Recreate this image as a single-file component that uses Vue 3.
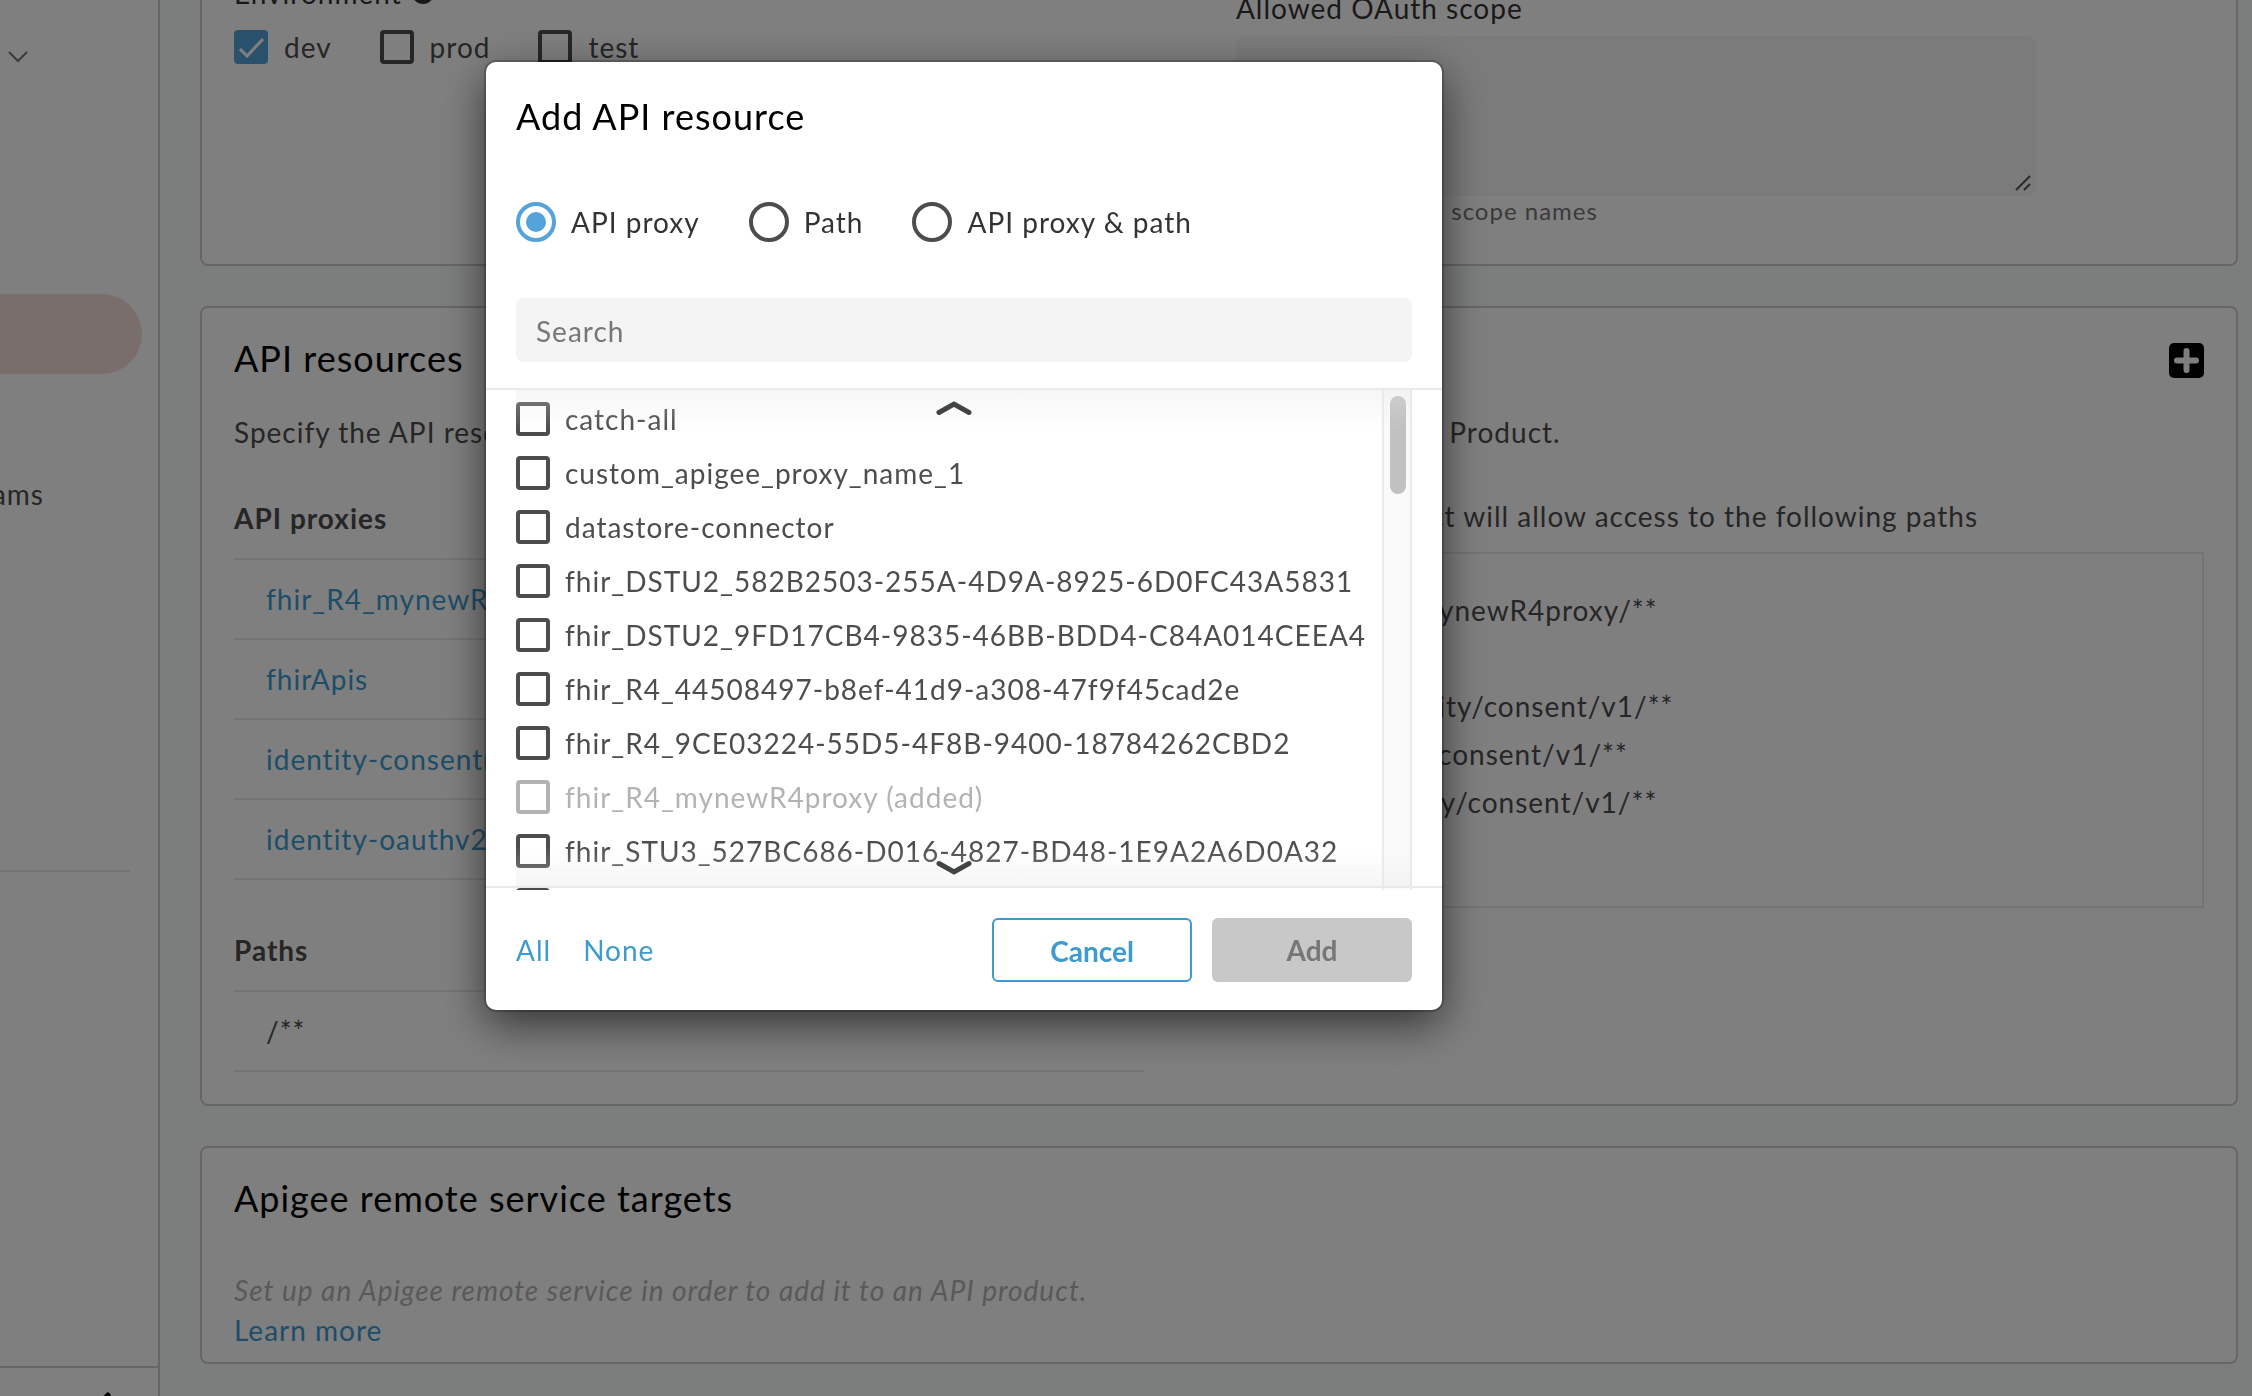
<script setup>
import { ref } from 'vue'

const environments = ref([
  { name: 'dev', on: true },
  { name: 'prod', on: false },
  { name: 'test', on: false },
])

const proxies = ['fhir_R4_mynewR4proxy', 'fhirApis', 'identity-consentmgmt', 'identity-oauthv2']

const allowedPaths = [
  '/apps/fhir/mynewR4proxy/**',
  '/fhir/**',
  '/as/v1/identity/consent/v1/**',
  '/r1/identity/consent/v1/**',
  '/idv2/identity/consent/v1/**',
  '/oauth/**',
]

const kind = ref('proxy')
const kinds = [
  { value: 'proxy', label: 'API proxy' },
  { value: 'path', label: 'Path' },
  { value: 'both', label: 'API proxy & path' },
]

const options = [
  { name: 'catch-all' },
  { name: 'custom_apigee_proxy_name_1' },
  { name: 'datastore-connector' },
  { name: 'fhir_DSTU2_582B2503-255A-4D9A-8925-6D0FC43A5831' },
  { name: 'fhir_DSTU2_9FD17CB4-9835-46BB-BDD4-C84A014CEEA4' },
  { name: 'fhir_R4_44508497-b8ef-41d9-a308-47f9f45cad2e' },
  { name: 'fhir_R4_9CE03224-55D5-4F8B-9400-18784262CBD2' },
  { name: 'fhir_R4_mynewR4proxy (added)', added: true },
  { name: 'fhir_STU3_527BC686-D016-4827-BD48-1E9A2A6D0A32' },
  { name: 'fhirApis' },
]
</script>

<template>
  <div class="page">
    <aside class="sidebar">
      <svg class="side-chevron" width="20" height="12" viewBox="0 0 20 12" aria-hidden="true">
        <path d="M1 1l9 9 9-9" fill="none" stroke="#777" stroke-width="2" />
      </svg>
      <div class="side-active"></div>
      <div class="side-item">Teams</div>
      <hr class="side-rule" />
      <div class="side-foot">
        <svg width="24" height="40" viewBox="0 0 24 40" aria-hidden="true">
          <path d="M20 3L4 20l16 17" fill="none" stroke="#000" stroke-width="5" stroke-linecap="round" />
        </svg>
      </div>
    </aside>

    <main class="content">
      <section class="card card-details">
        <div class="columns">
          <div class="env">
            <div class="field-label env-label">
              Environment
              <svg width="22" height="22" viewBox="0 0 22 22" aria-hidden="true"><circle cx="11" cy="11" r="11" fill="#333" /></svg>
            </div>
            <div class="env-list">
              <label v-for="e in environments" :key="e.name" class="check">
                <input v-model="e.on" type="checkbox" />
                <span>{{ e.name }}</span>
              </label>
            </div>
          </div>
          <div class="scope">
            <label class="field-label scope-label" for="scope">Allowed OAuth scope</label>
            <div class="scope-wrap">
              <textarea id="scope" class="scope-box"></textarea>
              <svg class="grip" width="16" height="16" viewBox="0 0 16 16" aria-hidden="true">
                <path d="M1 15L15 1M9 15l6-6" stroke="#555" stroke-width="2" />
              </svg>
            </div>
            <p class="hint">Comma-separated scope names</p>
          </div>
        </div>
      </section>

      <section class="card">
        <header class="card-head">
          <h2>API resources</h2>
          <button class="plus" type="button" aria-label="Add API resource">
            <svg width="35" height="35" viewBox="0 0 35 35" aria-hidden="true">
              <rect width="35" height="35" rx="5" fill="#000" />
              <path d="M17.500 8v19M8 17.500h19" stroke="#fff" stroke-width="6" stroke-linecap="round" />
            </svg>
          </button>
        </header>
        <p class="lead">
          Specify the API resources, API proxies and resource paths, that are to be bundled in the API Product.
        </p>
        <div class="columns resources">
          <div>
            <h3>API proxies</h3>
            <table class="rows">
              <tbody>
                <tr v-for="p in proxies" :key="p">
                  <td><a href="#">{{ p }}</a></td>
                </tr>
              </tbody>
            </table>
            <h3 class="paths-title">Paths</h3>
            <table class="rows">
              <tbody>
                <tr>
                  <td>/**</td>
                </tr>
              </tbody>
            </table>
          </div>
          <div>
            <p class="allow">This API product will allow access to the following paths</p>
            <ul class="allowed">
              <li v-for="p in allowedPaths" :key="p">{{ p }}</li>
            </ul>
          </div>
        </div>
      </section>

      <section class="card card-targets">
        <header class="card-head">
          <h2>Apigee remote service targets</h2>
        </header>
        <p class="empty">Set up an Apigee remote service in order to add it to an API product.</p>
        <a class="learn" href="#">Learn more</a>
      </section>
    </main>

    <div class="overlay">
      <form class="modal" role="dialog" aria-labelledby="modal-title" @submit.prevent>
        <h2 id="modal-title" class="modal-title">Add API resource</h2>
        <div class="kinds">
          <label v-for="k in kinds" :key="k.value" class="radio">
            <input v-model="kind" type="radio" name="kind" :value="k.value" />
            <span>{{ k.label }}</span>
          </label>
        </div>
        <div class="search">
          <input type="text" placeholder="Search" aria-label="Search" />
        </div>
        <div class="picker">
          <div class="options">
            <label
              v-for="o in options"
              :key="o.name"
              class="check option"
              :class="{ added: o.added }"
            >
              <input type="checkbox" :disabled="o.added" />
              <span>{{ o.name }}</span>
            </label>
          </div>
          <div class="track"><div class="thumb"></div></div>
          <div class="shade shade-top">
            <svg width="36" height="16" viewBox="0 0 36 16" aria-hidden="true">
              <path d="M3 12.500L18 4l15 8.500" fill="none" stroke="#404442" stroke-width="5" stroke-linecap="round" />
            </svg>
          </div>
          <div class="shade shade-bottom">
            <svg width="36" height="16" viewBox="0 0 36 16" aria-hidden="true">
              <path d="M3 3.500L18 12l15-8.500" fill="none" stroke="#404442" stroke-width="5" stroke-linecap="round" />
            </svg>
          </div>
          <div class="picker-rule"></div>
        </div>
        <footer class="modal-foot">
          <div class="quick">
            <a href="#">All</a>
            <a href="#">None</a>
          </div>
          <div class="actions">
            <button class="btn cancel" type="button">Cancel</button>
            <button class="btn add" type="submit" disabled>Add</button>
          </div>
        </footer>
      </form>
    </div>
  </div>
</template>

<style>
body {
  margin: 0;
  overflow: hidden;
}
</style>

<style scoped>
.page {
  display: flex;
  height: 100vh;
  overflow: hidden;
  background: #f9fcfa;
  color: #4d4d4d;
  font-family: Lato, "Liberation Sans", sans-serif;
  font-size: 28px;
  line-height: 40px;
  letter-spacing: 1px;
}
.page *,
.page *::before {
  box-sizing: border-box;
}
h2,
h3,
p,
ul {
  margin: 0;
  padding: 0;
}
a {
  color: #3d9bd1;
  text-decoration: none;
}
input,
textarea,
button {
  font: inherit;
  letter-spacing: inherit;
  margin: 0;
}

/* Sidebar */
.sidebar {
  display: flex;
  flex-direction: column;
  flex: none;
  width: 160px;
  border-right: 2px solid #ccc;
  background: #fff;
  overflow: hidden;
}
.side-chevron {
  flex: none;
  margin: 51px 0 231px 8px;
}
.side-active {
  flex: none;
  height: 80px;
  margin-right: 16px;
  border-radius: 0 40px 40px 0;
  background: #f4ddd8;
}
.side-item {
  display: flex;
  flex: none;
  align-items: center;
  justify-content: flex-end;
  height: 80px;
  margin-top: 80px;
  padding-right: 114px;
}
.side-rule {
  flex: none;
  width: 130px;
  height: 2px;
  margin: 336px 0 0;
  border: 0;
  background: #e6e6e6;
}
.side-foot {
  height: 30px;
  margin-top: auto;
  padding: 24px 0 0 88px;
  border-top: 2px solid #ccc;
  overflow: hidden;
}
.side-foot svg {
  display: block;
}

/* Cards */
.content {
  display: flex;
  flex: 1;
  flex-direction: column;
  gap: 40px;
  min-width: 0;
  margin-top: -83px;
  padding: 0 14px 0 40px;
}
.card {
  flex: none;
  padding: 32px;
  border: 2px solid #ccc;
  border-radius: 8px;
  background: #fff;
}
.card-details {
  padding-top: 54px;
  padding-bottom: 20px;
}
.card-targets {
  padding-bottom: 12px;
}
.columns {
  display: grid;
  grid-template-columns: minmax(0, 47fr) minmax(0, 50fr);
  column-gap: 92px;
}
.field-label {
  display: flex;
  align-items: center;
  gap: 10px;
  height: 40px;
  color: #333;
}
.env-label {
  margin-bottom: 14px;
}
.env-list {
  display: flex;
  gap: 48px;
}
.check {
  display: flex;
  align-items: center;
  gap: 16px;
}
.check input {
  appearance: none;
  flex: none;
  width: 34px;
  height: 34px;
  border: 4px solid #4d4d4d;
  border-radius: 4px;
  background: #fff;
}
.check input:checked {
  border-color: #55a3d8;
  background: #55a3d8 url("data:image/svg+xml,%3Csvg xmlns='http://www.w3.org/2000/svg' viewBox='0 0 34 34'%3E%3Cpath d='M6 19l7 7L29 9' fill='none' stroke='%23fff' stroke-width='3'/%3E%3C/svg%3E") center / 34px 34px no-repeat border-box;
}
.scope-label {
  margin: 15px 0 8px;
}
.scope-wrap {
  position: relative;
  width: 800px;
  max-width: 100%;
}
.scope-box {
  display: block;
  width: 100%;
  height: 160px;
  padding: 16px;
  border: 0;
  border-radius: 8px;
  background: #f6f6f6;
  resize: none;
}
.grip {
  position: absolute;
  right: 5px;
  bottom: 5px;
}
.hint {
  height: 48px;
  color: #757575;
  font-size: 24px;
  line-height: 30px;
}
.card-head {
  display: flex;
  align-items: center;
  justify-content: space-between;
  height: 40px;
}
.card-head h2,
.modal-title {
  color: #000;
  font-size: 36px;
  font-weight: 400;
}
.card-head h2 {
  padding-bottom: 4px;
}
.plus {
  padding: 0;
  border: 0;
  background: none;
}
.plus svg {
  display: block;
}
.lead {
  margin-top: 32px;
}
.resources {
  margin-top: 44px;
}
h3 {
  padding: 2px 0 20px;
  font-size: 28px;
  font-weight: 700;
}
.rows {
  width: 100%;
  border-collapse: separate;
  border-spacing: 0;
  border-top: 2px solid #e9e9e9;
}
.rows td {
  height: 80px;
  padding: 0 32px;
  border-bottom: 2px solid #e9e9e9;
}
.paths-title {
  margin-top: 48px;
}
.allow {
  margin-bottom: 16px;
}
.allowed {
  padding: 32px;
  border: 2px solid #e9e9e9;
  list-style: none;
  line-height: 48px;
}
.empty {
  margin-top: 50px;
  color: #b3b3b3;
  font-style: italic;
}
.learn {
  display: table;
}

/* Dialog */
.overlay {
  position: fixed;
  inset: 0;
  padding: 62px 0 0 486px;
  background: rgba(0, 0, 0, 0.5);
}
.modal {
  width: 956px;
  border-radius: 10px;
  background: #fff;
  box-shadow: 0 0 0 2px rgba(0, 0, 0, 0.2), 0 14px 44px rgba(0, 0, 0, 0.6);
}
.modal-title {
  padding: 34px 30px 0;
}
.kinds {
  display: flex;
  gap: 49px;
  padding: 66px 30px 56px;
}
.radio {
  display: flex;
  align-items: center;
  gap: 15px;
  color: #333;
}
.radio input {
  appearance: none;
  display: grid;
  place-items: center;
  flex: none;
  width: 40px;
  height: 40px;
  border: 4px solid #4d4d4d;
  border-radius: 50%;
}
.radio input:checked {
  border-color: #55a3d8;
}
.radio input:checked::before {
  content: "";
  width: 20px;
  height: 20px;
  border-radius: 50%;
  background: #55a3d8;
}
.search {
  padding: 0 30px 26px;
  border-bottom: 2px solid #eaeaea;
}
.search input {
  display: block;
  width: 100%;
  height: 64px;
  padding: 2px 20px 0;
  border: 0;
  border-radius: 8px;
  background: #f4f4f4;
  color: #4d4d4d;
}
.search input::placeholder {
  color: #777;
}
.picker {
  position: relative;
  display: flex;
  height: 500px;
  padding: 0 30px;
}
.options {
  flex: 1;
  padding-top: 2px;
  overflow: hidden;
}
.option {
  gap: 15px;
  height: 54px;
}
.added {
  color: #b3b3b3;
}
.added input {
  border-color: #b3b3b3;
}
.track {
  width: 30px;
  padding: 6px;
  border: solid #ebebeb;
  border-width: 0 2px;
  background: #fafafa;
}
.thumb {
  width: 16px;
  height: 98px;
  border-radius: 8px;
  background: #c1c1c1;
}
.shade {
  position: absolute;
  right: 30px;
  left: 30px;
  display: flex;
  justify-content: center;
  height: 40px;
  padding: 10px 20px 10px 0;
}
.shade-top {
  top: 0;
  background: linear-gradient(rgba(230, 230, 230, 0.35), rgba(230, 230, 230, 0));
}
.shade-bottom {
  bottom: 4px;
  align-items: flex-end;
  background: linear-gradient(rgba(230, 230, 230, 0), rgba(230, 230, 230, 0.35));
}
.picker-rule {
  position: absolute;
  right: 0;
  bottom: 2px;
  left: 0;
  height: 2px;
  background: #eaeaea;
}
.modal-foot {
  display: flex;
  align-items: center;
  justify-content: space-between;
  padding: 28px 30px;
}
.quick {
  display: flex;
  gap: 32px;
}
.actions {
  display: flex;
  gap: 20px;
}
.btn {
  width: 200px;
  height: 64px;
  padding: 0;
  border: 2px solid #3d9bd1;
  border-radius: 6px;
  background: #fff;
  color: #3d9bd1;
  font-weight: 700;
  letter-spacing: 0;
}
.cancel {
  padding-top: 2px;
}
.add {
  border-color: #c8c8c8;
  background: #c8c8c8;
  color: #777;
}
</style>
